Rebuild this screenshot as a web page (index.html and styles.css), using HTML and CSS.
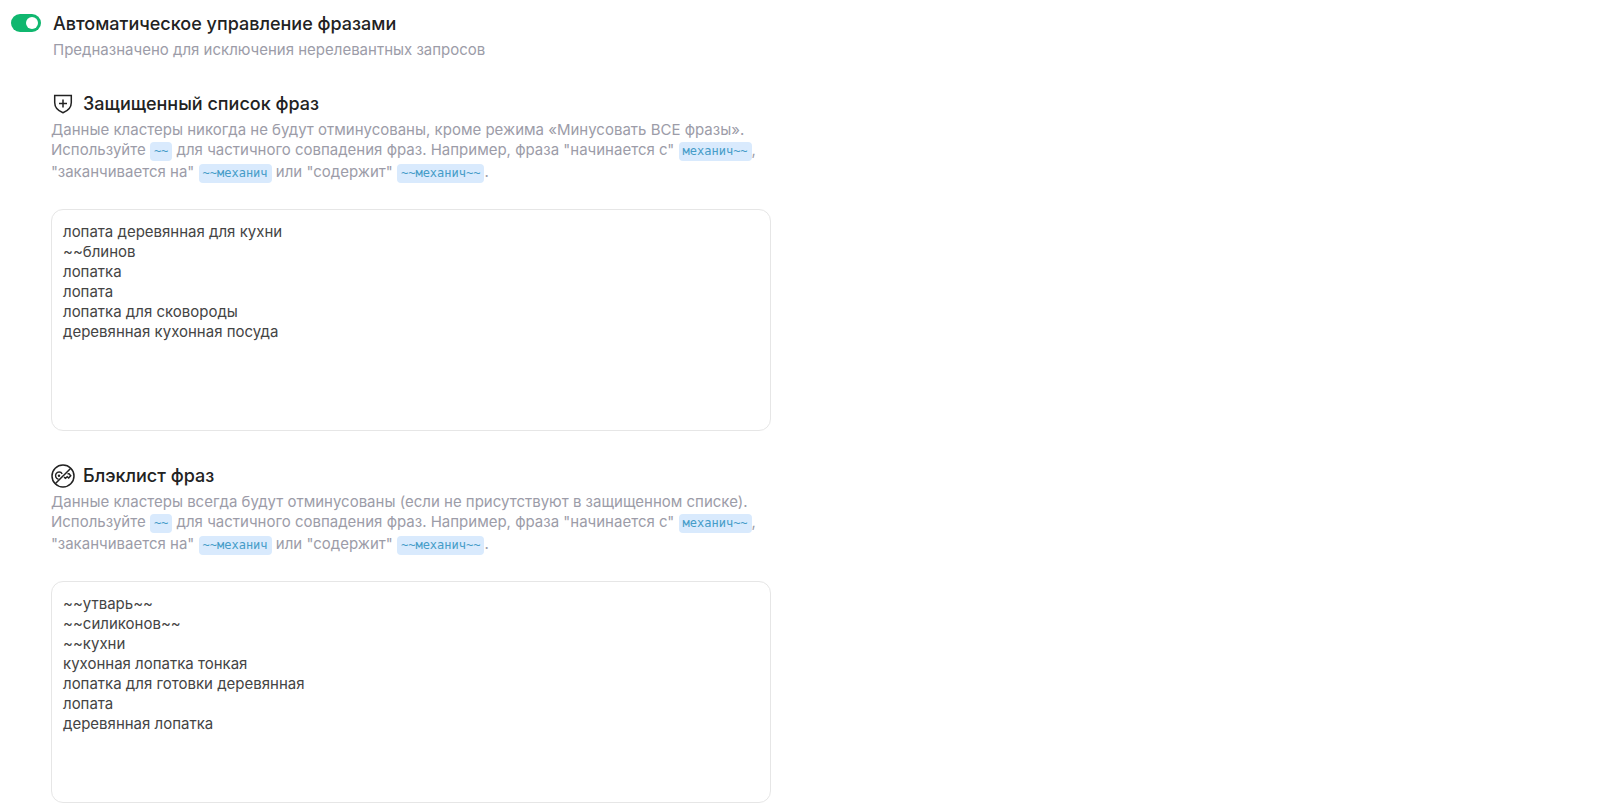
FILE: index.html
```html
<!DOCTYPE html>
<html lang="ru">
  <head>
    <meta charset="UTF-8">
    <meta name="viewport" content="width=device-width, initial-scale=1.0">
    <title>Автоматическое управление фразами</title>
    <link rel="stylesheet" href="styles.css">
  </head>
  <body>
    <main class="settings">
      <header class="settings-header">
        <input type="checkbox" role="switch" id="autoPhrases" class="switch" checked>
        <div>
          <label for="autoPhrases" class="title">Автоматическое управление фразами</label>
          <p class="text">Предназначено для исключения нерелевантных запросов</p>
        </div>
      </header>

      <section class="phrases">
        <div class="phrases-head">
          <svg class="icon" viewBox="0 0 24 24" aria-hidden="true">
            <path d="M3.700 3.500h16.600v7c0 5.500-3.300 8.300-8.300 10.200-5-1.900-8.300-4.700-8.300-10.200z"/>
            <path d="M12 7.500v8M8 11.500h8"/>
          </svg>
          <label for="protectedList" class="title">Защищенный список фраз</label>
        </div>
        <p class="text">
          Данные кластеры никогда не будут отминусованы, кроме режима «Минусовать ВСЕ фразы».<br>
          Используйте <code>~~</code> для частичного совпадения фраз. Например, фраза "начинается с" <code>механич~~</code>,<br>
          "заканчивается на" <code>~~механич</code> или "содержит" <code>~~механич~~</code>.
        </p>
        <textarea id="protectedList" class="list" rows="9" spellcheck="false">
лопата деревянная для кухни
~~блинов
лопатка
лопата
лопатка для сковороды
деревянная кухонная посуда</textarea>
      </section>

      <section class="phrases">
        <div class="phrases-head">
          <svg class="icon" viewBox="0 0 24 24" aria-hidden="true">
            <circle cx="12" cy="12" r="11"/>
            <path d="M4.200 19.800 19.800 4.200"/>
            <path d="M11.200 9.800a3.600 3.600 0 1 0-3.700 5.400M16.500 9.800h1.500l1.700 2-2 2.200-1.500-1.300-1.700 1.500-1.500-1"/>
            <circle class="dot" cx="8" cy="11.800" r="1.200"/>
          </svg>
          <label for="blackList" class="title">Блэклист фраз</label>
        </div>
        <p class="text">
          Данные кластеры всегда будут отминусованы (если не присутствуют в защищенном списке).<br>
          Используйте <code>~~</code> для частичного совпадения фраз. Например, фраза "начинается с" <code>механич~~</code>,<br>
          "заканчивается на" <code>~~механич</code> или "содержит" <code>~~механич~~</code>.
        </p>
        <textarea id="blackList" class="list" rows="9" spellcheck="false">
~~утварь~~
~~силиконов~~
~~кухни
кухонная лопатка тонкая
лопатка для готовки деревянная
лопата
деревянная лопатка</textarea>
      </section>
    </main>
  </body>
</html>
```

FILE: styles.css
```css
* {
  box-sizing: border-box;
}

body {
  margin: 0;
  background-color: #fff;
  color: #222;
  font-family: Inter, Roboto, sans-serif;
  font-size: 15px;
  line-height: 20px;
}

.settings {
  padding: 12px 11px 0;
}

.settings-header {
  display: flex;
  gap: 12px;
  margin-bottom: 32px;
}

.switch {
  appearance: none;
  display: flex;
  justify-content: flex-end;
  flex: none;
  width: 30px;
  height: 18px;
  margin: 2px 0;
  padding: 3px;
  border-radius: 9px;
  background-color: #10b76f;
  cursor: pointer;
}

.switch::before {
  content: "";
  width: 12px;
  height: 12px;
  border-radius: 50%;
  background-color: #fff;
}

.switch:not(:checked) {
  justify-content: flex-start;
  background-color: #c4c4cc;
}

.title {
  font-size: 18px;
  font-weight: 500;
  line-height: 24px;
}

.text {
  margin: 4px 0 0;
  color: #9c9ca8;
}

.phrases {
  max-width: 760px;
  padding-left: 40px;
}

.phrases + .phrases {
  margin-top: 33px;
}

.phrases-head {
  display: flex;
  align-items: center;
  gap: 8px;
}

.icon {
  width: 24px;
  height: 24px;
  fill: none;
  stroke: #222;
  stroke-width: 1.500;
}

.dot {
  fill: #222;
  stroke: none;
}

code {
  display: inline-block;
  margin-bottom: 1px;
  padding: 0 4px;
  border-radius: 4px;
  background-color: #d9eafd;
  color: #459cc8;
  font-family: "DejaVu Sans Mono", monospace;
  font-size: 12px;
  line-height: 19px;
}

.list {
  display: block;
  width: 100%;
  height: 222px;
  margin-top: 25px;
  padding: 12px 11px;
  border: 1px solid #e6e6e6;
  border-radius: 12px;
  color: #444;
  font: inherit;
  resize: none;
  outline: none;
}
```
